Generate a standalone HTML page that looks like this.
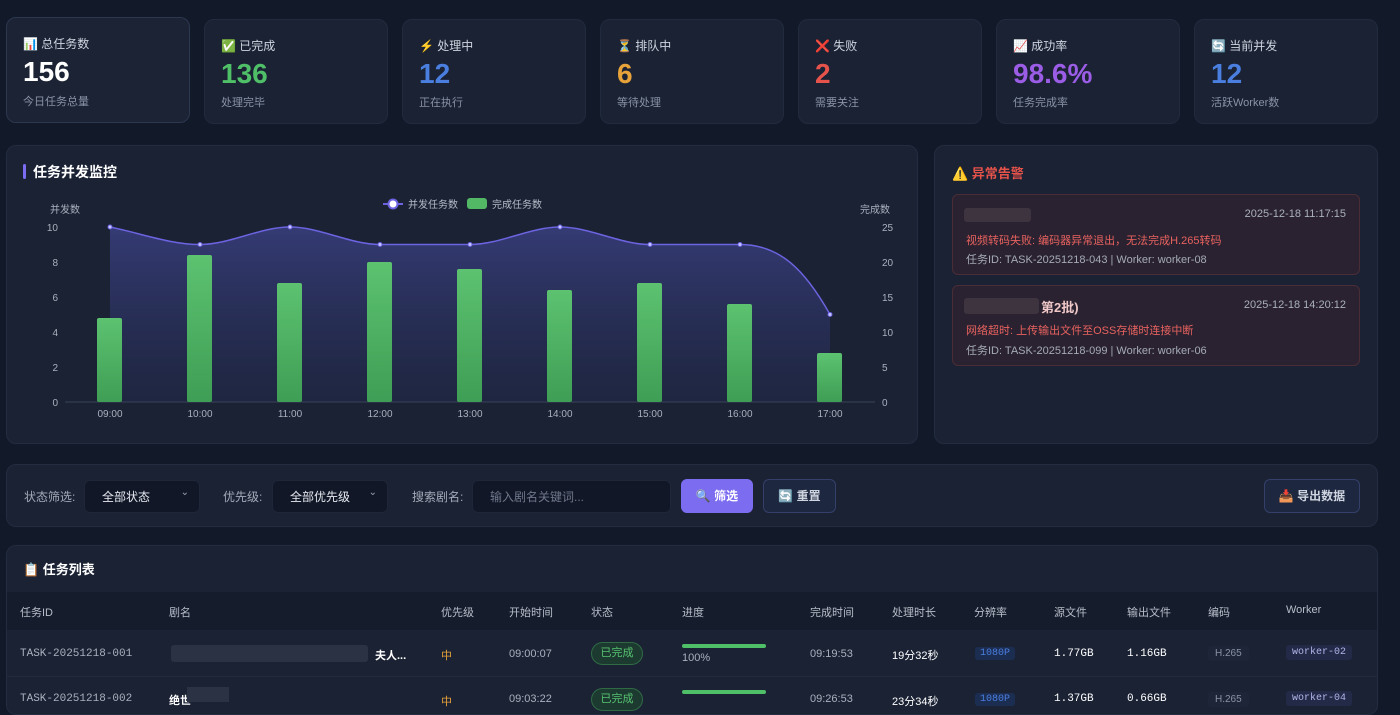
<!DOCTYPE html>
<html><head><meta charset="utf-8">
<style>
*{box-sizing:border-box;margin:0;padding:0}
body{width:1400px;height:700px;overflow:hidden;background:#121929;font-family:"Liberation Sans","Noto Sans CJK SC",sans-serif;color:#e6e9f0;position:relative}
.abs{position:absolute}
.card{position:absolute;top:19px;width:184px;height:105px;background:#1a2234;border:1px solid #222b3e;border-radius:10px;padding:0 16px}
.card .t{position:absolute;left:16px;top:17px;font-size:12px;color:#cfd5e0}
.card .v{position:absolute;left:16px;top:38px;font-size:28px;font-weight:bold}
.card .s{position:absolute;left:16px;top:74px;font-size:11px;color:#8a93a6}
.panel{position:absolute;background:#1a2234;border:1px solid #232c40;border-radius:10px}
.alert{position:absolute;left:952px;width:408px;background:#2a2230;border:1px solid #4a2c36;border-radius:6px}
.alert .d{position:absolute;right:13px;top:13px;font-size:11px;color:#aab0bd}
.alert .m{position:absolute;left:13px;font-size:11px;color:#e8625f}
.alert .i{position:absolute;left:13px;font-size:11px;color:#a5abb8}
.sel{position:absolute;top:480px;height:33px;background:#111727;border:1px solid #1e2638;border-radius:6px;font-size:12px;color:#e6e9f0;padding:7px 0 0 17px}
.sel span{position:absolute;right:10px;top:6px;color:#9aa2b2;font-size:10px}
.lbl{position:absolute;top:488px;font-size:12px;color:#a3aab8}
.h{position:absolute;top:604px;font-size:11px;color:#b7bdc9}
.r{position:absolute;font-size:11px}
.mono{font-family:"Liberation Mono","Noto Sans CJK SC",monospace}
</style></head><body>

<div class="card" style="left:6px;top:17px;width:184px;height:106px;border-color:#2c3850;background:#1b2335"><div class="t">📊 总任务数</div><div class="v" style="color:#fff">156</div><div class="s" style="top:75px">今日任务总量</div></div>
<div class="card" style="left:204px"><div class="t">✅ 已完成</div><div class="v" style="color:#4fbf68">136</div><div class="s">处理完毕</div></div>
<div class="card" style="left:402px"><div class="t">⚡ 处理中</div><div class="v" style="color:#4a7fe0">12</div><div class="s">正在执行</div></div>
<div class="card" style="left:600px"><div class="t">⏳ 排队中</div><div class="v" style="color:#e8a23a">6</div><div class="s">等待处理</div></div>
<div class="card" style="left:798px"><div class="t">❌ 失败</div><div class="v" style="color:#e5534b">2</div><div class="s">需要关注</div></div>
<div class="card" style="left:996px"><div class="t">📈 成功率</div><div class="v" style="color:#9b5de5">98.6%</div><div class="s">任务完成率</div></div>
<div class="card" style="left:1194px"><div class="t">🔄 当前并发</div><div class="v" style="color:#4a7fe0">12</div><div class="s">活跃Worker数</div></div>

<div class="panel" style="left:6px;top:145px;width:912px;height:299px"></div>
<div class="abs" style="left:23px;top:164px;width:3px;height:15px;background:#7b6cf0;border-radius:2px"></div>
<div class="abs" style="left:33px;top:162px;font-size:14px;font-weight:bold;color:#fff">任务并发监控</div>

<svg class="abs" style="left:0;top:0" width="1400" height="700" font-family="Liberation Sans,Noto Sans CJK SC,sans-serif">
<defs><linearGradient id="g" x1="0" y1="0" x2="0" y2="1"><stop offset="0" stop-color="#4a4fa8" stop-opacity=".55"/><stop offset="1" stop-color="#2a3060" stop-opacity=".3"/></linearGradient>
<linearGradient id="b" x1="0" y1="0" x2="0" y2="1"><stop offset="0" stop-color="#5cc270"/><stop offset="1" stop-color="#3f9e55"/></linearGradient></defs>
<g font-size="10" fill="#aab0bd">
<text x="50" y="213">并发数</text><text x="860" y="213">完成数</text>
<text x="58" y="231" text-anchor="end">10</text><text x="58" y="266" text-anchor="end">8</text><text x="58" y="301" text-anchor="end">6</text><text x="58" y="336" text-anchor="end">4</text><text x="58" y="371" text-anchor="end">2</text><text x="58" y="406" text-anchor="end">0</text>
<text x="882" y="231">25</text><text x="882" y="266">20</text><text x="882" y="301">15</text><text x="882" y="336">10</text><text x="882" y="371">5</text><text x="882" y="406">0</text>
<text x="110" y="417" text-anchor="middle">09:00</text><text x="200" y="417" text-anchor="middle">10:00</text><text x="290" y="417" text-anchor="middle">11:00</text><text x="380" y="417" text-anchor="middle">12:00</text><text x="470" y="417" text-anchor="middle">13:00</text><text x="560" y="417" text-anchor="middle">14:00</text><text x="650" y="417" text-anchor="middle">15:00</text><text x="740" y="417" text-anchor="middle">16:00</text><text x="830" y="417" text-anchor="middle">17:00</text>
</g>
<path d="M110,227 C140,233 170,244.5 200,244.5 C230,244.5 260,227 290,227 C320,227 350,244.5 380,244.5 L470,244.5 C500,244.5 530,227 560,227 C590,227 620,244.5 650,244.5 L740,244.5 C780,244.5 805,270 830,314.5 L830,402 L110,402 Z" fill="url(#g)"/>
<line x1="65" y1="402" x2="875" y2="402" stroke="#3a4256"/>
<g fill="url(#b)">
<rect x="97" y="318" width="25" height="84" rx="2"/><rect x="187" y="255" width="25" height="147" rx="2"/><rect x="277" y="283" width="25" height="119" rx="2"/><rect x="367" y="262" width="25" height="140" rx="2"/><rect x="457" y="269" width="25" height="133" rx="2"/><rect x="547" y="290" width="25" height="112" rx="2"/><rect x="637" y="283" width="25" height="119" rx="2"/><rect x="727" y="304" width="25" height="98" rx="2"/><rect x="817" y="353" width="25" height="49" rx="2"/>
</g>
<path d="M110,227 C140,233 170,244.5 200,244.5 C230,244.5 260,227 290,227 C320,227 350,244.5 380,244.5 L470,244.5 C500,244.5 530,227 560,227 C590,227 620,244.5 650,244.5 L740,244.5 C780,244.5 805,270 830,314.5" fill="none" stroke="#6c63e0" stroke-width="1.5"/>
<g fill="#c8c6ff" stroke="#6c63e0" stroke-width="1"><circle cx="110" cy="227" r="2"/><circle cx="200" cy="244.5" r="2"/><circle cx="290" cy="227" r="2"/><circle cx="380" cy="244.5" r="2"/><circle cx="470" cy="244.5" r="2"/><circle cx="560" cy="227" r="2"/><circle cx="650" cy="244.5" r="2"/><circle cx="740" cy="244.5" r="2"/><circle cx="830" cy="314.5" r="2"/></g>
<line x1="383" y1="204" x2="403" y2="204" stroke="#6c63e0" stroke-width="2"/><circle cx="393" cy="204" r="4.5" fill="#fff" stroke="#6c63e0" stroke-width="2"/>
<text x="408" y="208" font-size="10" fill="#b7bdc9">并发任务数</text>
<rect x="467" y="198" width="20" height="11" rx="3" fill="#52b866"/>
<text x="492" y="208" font-size="10" fill="#b7bdc9">完成任务数</text>
</svg>

<div class="panel" style="left:934px;top:145px;width:444px;height:299px;background:#1b2233"></div>
<div class="abs" style="left:952px;top:163px;font-size:13px;font-weight:bold;color:#e5534b">⚠️ 异常告警</div>
<div class="alert" style="top:194px;height:81px">
<div class="abs" style="left:11px;top:13px;width:67px;height:14px;background:#3e3440;border-radius:3px"></div>
<div class="d">2025-12-18 11:17:15</div>
<div class="m" style="top:37px">视频转码失败: 编码器异常退出，无法完成H.265转码</div>
<div class="i" style="top:56px">任务ID: TASK-20251218-043 | Worker: worker-08</div>
</div>
<div class="alert" style="top:285px;height:81px">
<div class="abs" style="left:11px;top:12px;width:75px;height:16px;background:#3e3440;border-radius:3px"></div>
<div class="abs" style="left:88px;top:11px;font-size:13px;font-weight:bold;color:#f0c8c8">第2批)</div>
<div class="d">2025-12-18 14:20:12</div>
<div class="m" style="top:36px">网络超时: 上传输出文件至OSS存储时连接中断</div>
<div class="i" style="top:56px">任务ID: TASK-20251218-099 | Worker: worker-06</div>
</div>

<div class="panel" style="left:6px;top:464px;width:1372px;height:63px"></div>
<div class="lbl" style="left:24px">状态筛选:</div>
<div class="sel" style="left:84px;width:116px">全部状态<span>⌄</span></div>
<div class="lbl" style="left:223px">优先级:</div>
<div class="sel" style="left:272px;width:116px">全部优先级<span>⌄</span></div>
<div class="lbl" style="left:412px">搜索剧名:</div>
<div class="sel" style="left:472px;width:199px;color:#6f778a">输入剧名关键词...</div>
<div class="abs" style="left:681px;top:479px;width:72px;height:34px;background:#7b6cf0;border-radius:6px;font-size:12px;color:#fff;text-align:center;line-height:34px;font-weight:bold">🔍 筛选</div>
<div class="abs" style="left:763px;top:479px;width:73px;height:34px;background:#1e2740;border:1px solid #34406a;border-radius:6px;font-size:12px;color:#cfd5e0;text-align:center;line-height:32px;font-weight:bold">🔄 重置</div>
<div class="abs" style="left:1264px;top:479px;width:96px;height:34px;background:#1e2740;border:1px solid #34406a;border-radius:6px;font-size:12px;color:#cfd5e0;text-align:center;line-height:32px;font-weight:bold">📥 导出数据</div>

<div class="panel" style="left:6px;top:545px;width:1372px;height:170px"></div>
<div class="abs" style="left:23px;top:559px;font-size:13px;font-weight:bold;color:#fff">📋 任务列表</div>
<div class="abs" style="left:7px;top:592px;width:1370px;height:38px;background:#151c2c"></div>
<div class="abs" style="left:7px;top:676px;width:1370px;height:1px;background:#222b3e"></div>
<div class="h" style="left:20px">任务ID</div><div class="h" style="left:169px">剧名</div><div class="h" style="left:441px">优先级</div><div class="h" style="left:509px">开始时间</div><div class="h" style="left:591px">状态</div><div class="h" style="left:682px">进度</div><div class="h" style="left:810px">完成时间</div><div class="h" style="left:892px">处理时长</div><div class="h" style="left:974px">分辨率</div><div class="h" style="left:1054px">源文件</div><div class="h" style="left:1127px">输出文件</div><div class="h" style="left:1208px">编码</div><div class="h" style="left:1286px">Worker</div>

<div class="r mono" style="left:20px;top:648px;color:#aab0bd">TASK-20251218-001</div>
<div class="abs" style="left:171px;top:645px;width:197px;height:17px;background:#2a3244;border-radius:3px"></div>
<div class="r" style="left:375px;top:647px;color:#fff;font-weight:bold">夫人...</div>
<div class="r" style="left:441px;top:647px;color:#e8a23a">中</div>
<div class="r" style="left:509px;top:648px;color:#aab0bd">09:00:07</div>
<div class="abs" style="left:591px;top:642px;width:52px;height:23px;border:1px solid #2f6a45;background:#1d3a30;border-radius:12px;font-size:11px;color:#56c271;text-align:center;line-height:21px">已完成</div>
<div class="abs" style="left:682px;top:644px;width:84px;height:4px;background:#4fbf68;border-radius:2px"></div>
<div class="r" style="left:682px;top:652px;color:#aab0bd">100%</div>
<div class="r" style="left:810px;top:648px;color:#aab0bd">09:19:53</div>
<div class="r" style="left:892px;top:647px;color:#fff">19分32秒</div>
<div class="abs mono" style="left:975px;top:647px;padding:1px 5px;background:#1c2d52;color:#4a7fe0;font-size:10px;border-radius:3px">1080P</div>
<div class="r mono" style="left:1054px;top:648px;color:#fff">1.77GB</div>
<div class="r mono" style="left:1127px;top:648px;color:#fff">1.16GB</div>
<div class="abs" style="left:1208px;top:646px;padding:2px 7px;background:#1e2538;color:#8a93a6;font-size:10px;border-radius:3px">H.265</div>
<div class="abs mono" style="left:1286px;top:645px;padding:2px 6px;background:#232a48;color:#b0b5e8;font-size:10px;border-radius:3px">worker-02</div>

<div class="r mono" style="left:20px;top:693px;color:#aab0bd">TASK-20251218-002</div>
<div class="r" style="left:169px;top:692px;color:#fff;font-weight:bold">绝世</div>
<div class="abs" style="left:187px;top:687px;width:42px;height:15px;background:#2a3244"></div>
<div class="r" style="left:441px;top:693px;color:#e8a23a">中</div>
<div class="r" style="left:509px;top:693px;color:#aab0bd">09:03:22</div>
<div class="abs" style="left:591px;top:688px;width:52px;height:23px;border:1px solid #2f6a45;background:#1d3a30;border-radius:12px;font-size:11px;color:#56c271;text-align:center;line-height:21px">已完成</div>
<div class="abs" style="left:682px;top:690px;width:84px;height:4px;background:#4fbf68;border-radius:2px"></div>
<div class="r" style="left:810px;top:693px;color:#aab0bd">09:26:53</div>
<div class="r" style="left:892px;top:693px;color:#fff">23分34秒</div>
<div class="abs mono" style="left:975px;top:693px;padding:1px 5px;background:#1c2d52;color:#4a7fe0;font-size:10px;border-radius:3px">1080P</div>
<div class="r mono" style="left:1054px;top:693px;color:#fff">1.37GB</div>
<div class="r mono" style="left:1127px;top:693px;color:#fff">0.66GB</div>
<div class="abs" style="left:1208px;top:692px;padding:2px 7px;background:#1e2538;color:#8a93a6;font-size:10px;border-radius:3px">H.265</div>
<div class="abs mono" style="left:1286px;top:691px;padding:2px 6px;background:#232a48;color:#b0b5e8;font-size:10px;border-radius:3px">worker-04</div>
</body></html>
